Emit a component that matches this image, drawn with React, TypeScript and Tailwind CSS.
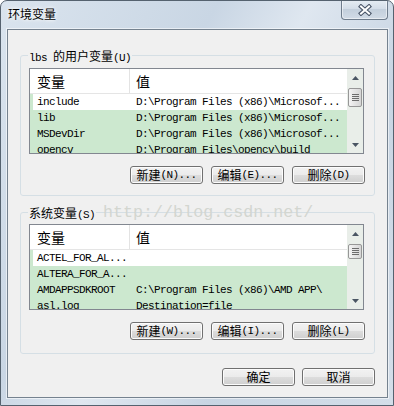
import React from "react";

type Row = { name: string; value: string; white?: boolean };

const cjk = "font-['Noto_Sans_CJK_SC','Microsoft_YaHei',sans-serif]";
const mono = "font-['Liberation_Mono','Courier_New',monospace] text-[11px] tracking-[-0.6px]";

const USER_ROWS: Row[] = [
  { name: "include", value: "D:\\Program Files (x86)\\Microsof...", white: true },
  { name: "lib", value: "D:\\Program Files (x86)\\Microsof..." },
  { name: "MSDevDir", value: "D:\\Program Files (x86)\\Microsof..." },
  { name: "opencv", value: "D:\\Program Files\\opencv\\build" },
];

const SYS_ROWS: Row[] = [
  { name: "ACTEL_FOR_AL...", value: "", white: true },
  { name: "ALTERA_FOR_A...", value: "" },
  { name: "AMDAPPSDKROOT", value: "C:\\Program Files (x86)\\AMD APP\\" },
  { name: "asl.log", value: "Destination=file" },
];

function Arrow({ down }: { down?: boolean }): React.ReactElement {
  return (
    <svg width="7" height="4" viewBox="0 0 7 4">
      <polygon points={down ? "0,0 7,0 3.5,4" : "3.5,0 7,4 0,4"} fill="#4a5563" />
    </svg>
  );
}

function ScrollBar({ thumb }: { thumb: string }): React.ReactElement {
  return (
    <div className="flex w-[16px] shrink-0 flex-col bg-[#e9eee9]">
      <div className="flex h-[17px] items-center justify-center">
        <Arrow />
      </div>
      <div
        className={`mx-[1px] mt-[2px] flex flex-col items-center justify-center gap-[1px] rounded-[2px] border border-[#979797] bg-[linear-gradient(90deg,#f4f4f4,#e4e4e4_50%,#d6d6d6)] ${thumb}`}
      >
        <span className="h-px w-[7px] bg-[#6c6c6c]" />
        <span className="h-px w-[7px] bg-[#6c6c6c]" />
        <span className="h-px w-[7px] bg-[#6c6c6c]" />
        <span className="h-px w-[7px] bg-[#6c6c6c]" />
      </div>
      <div className="flex-1" />
      <div className="flex h-[17px] items-center justify-center">
        <Arrow down />
      </div>
    </div>
  );
}

function ListView({ rows, thumb }: { rows: Row[]; thumb: string }): React.ReactElement {
  return (
    <div className="flex h-[86px] w-[335px] overflow-hidden border border-[#828790] bg-[#cce8cf]">
      <div className="flex min-w-0 flex-1 flex-col overflow-hidden">
        {/* 列头 */}
        <div className={`flex h-[25px] shrink-0 border-b border-[#e5e5e5] bg-white text-[14px] leading-[24px] text-black ${cjk}`}>
          <div className="w-[100px] border-r border-[#e3e3e3] pl-[7px]">变量</div>
          <div className="pl-[6px]">值</div>
        </div>
        {rows.map((r) => (
          <div
            key={r.name}
            className={`flex h-[16px] shrink-0 items-center whitespace-nowrap border-l-[3px] border-[#cce8cf] leading-[16px] text-black ${
              r.white ? "bg-white" : "bg-[#cce8cf]"
            } ${mono}`}
          >
            <div className="w-[97px] overflow-hidden pl-[4px]">{r.name}</div>
            <div className="pl-[6px]">{r.value}</div>
          </div>
        ))}
      </div>
      <ScrollBar thumb={thumb} />
    </div>
  );
}

function Btn({ children, w = "w-[73px]" }: { children: React.ReactNode; w?: string }): React.ReactElement {
  return (
    <button
      type="button"
      className={`flex h-[18px] items-center justify-center rounded-[3px] border border-[#707070] bg-[linear-gradient(#f2f2f2,#ebebeb_50%,#dddddd_50%,#cfcfcf)] leading-[16px] text-black shadow-[inset_0_0_0_1px_#fcfcfc] ${w}`}
    >
      {children}
    </button>
  );
}

function Cn({ children }: { children: React.ReactNode }): React.ReactElement {
  return <span className={`text-[12px] ${cjk}`}>{children}</span>;
}

function Lt({ children }: { children: React.ReactNode }): React.ReactElement {
  return <span className={mono}>{children}</span>;
}

export default function App(): React.ReactElement {
  return (
    <div className="relative flex h-[406px] w-[394px] flex-col overflow-hidden rounded-t-[7px] border border-[#55626f] bg-[linear-gradient(120deg,#dae4ee_0%,#c9d6e4_35%,#dfe7f0_50%,#c8d5e3_70%,#d4dee9_100%)] pb-[7px] pl-[6px] pr-[5px]">
      {/* 标题栏 */}
      <div className="flex h-[28px] shrink-0 items-start justify-between">
        <div className={`pl-[1px] pt-[5px] text-[12px] leading-[16px] text-black [text-shadow:0_0_5px_#fff,0_0_3px_#fff] ${cjk}`}>
          环境变量
        </div>
        <div className="-mt-[1px] flex h-[20px] w-[47px] items-center justify-center rounded-b-[4px] border border-t-0 border-[#6e7c8c] bg-[linear-gradient(#e6edf4,#d2dce7_50%,#c3cfdc_50%,#d1dbe6)] shadow-[inset_0_0_0_1px_rgba(255,255,255,0.5)]">
          <svg width="14" height="12" viewBox="0 0 14 12">
            <path d="M3 2.5 L11 9.5 M11 2.5 L3 9.5" stroke="#4a5668" strokeWidth="4.2" strokeLinecap="square" />
            <path d="M3 2.5 L11 9.5 M11 2.5 L3 9.5" stroke="#ffffff" strokeWidth="2" strokeLinecap="square" />
          </svg>
        </div>
      </div>

      {/* 客户区 */}
      <div className="flex flex-1 flex-col border border-[#75828f] bg-[#f0f0f0] px-[12px] pt-[18px] shadow-[0_0_0_1px_rgba(255,255,255,0.55)]">
        {/* 用户变量 */}
        <fieldset className="rounded-[3px] border border-[#d5dfe5] pb-[11px] pl-[8px] pr-[9px]">
          <legend className="-ml-[1px] h-[14px] px-[1px] leading-[14px] text-black">
            <Lt>lbs </Lt>
            <Cn>的用户变量</Cn>
            <Lt>(U)</Lt>
          </legend>
          <div className="mt-[6px]">
            <ListView rows={USER_ROWS} thumb="h-[19px]" />
          </div>
          <div className="mt-[12px] flex justify-end gap-[8px]">
            <Btn>
              <Cn>新建</Cn>
              <Lt>(N)...</Lt>
            </Btn>
            <Btn>
              <Cn>编辑</Cn>
              <Lt>(E)...</Lt>
            </Btn>
            <Btn>
              <Cn>删除</Cn>
              <Lt>(D)</Lt>
            </Btn>
          </div>
        </fieldset>

        {/* 系统变量 */}
        <fieldset className="mt-[9px] rounded-[3px] border border-[#d5dfe5] pb-[13px] pl-[8px] pr-[9px]">
          <legend className="-ml-[1px] h-[14px] px-[1px] leading-[14px] text-black">
            <Cn>系统变量</Cn>
            <Lt>(S)</Lt>
          </legend>
          <div className="mt-[5px]">
            <ListView rows={SYS_ROWS} thumb="h-[15px]" />
          </div>
          <div className="mt-[12px] flex justify-end gap-[8px]">
            <Btn>
              <Cn>新建</Cn>
              <Lt>(W)...</Lt>
            </Btn>
            <Btn>
              <Cn>编辑</Cn>
              <Lt>(I)...</Lt>
            </Btn>
            <Btn>
              <Cn>删除</Cn>
              <Lt>(L)</Lt>
            </Btn>
          </div>
        </fieldset>

        <div className="mt-[14px] flex justify-end gap-[7px] pr-[-1px]">
          <Btn>
            <Cn>确定</Cn>
          </Btn>
          <Btn>
            <Cn>取消</Cn>
          </Btn>
        </div>
      </div>

      {/* 水印 */}
      <div className="pointer-events-none absolute left-[102px] top-[203px] font-['Liberation_Mono','Courier_New',monospace] text-[16.7px] leading-[18px] text-[#d3d6d0]">
        http://blog.csdn.net/
      </div>
    </div>
  );
}
